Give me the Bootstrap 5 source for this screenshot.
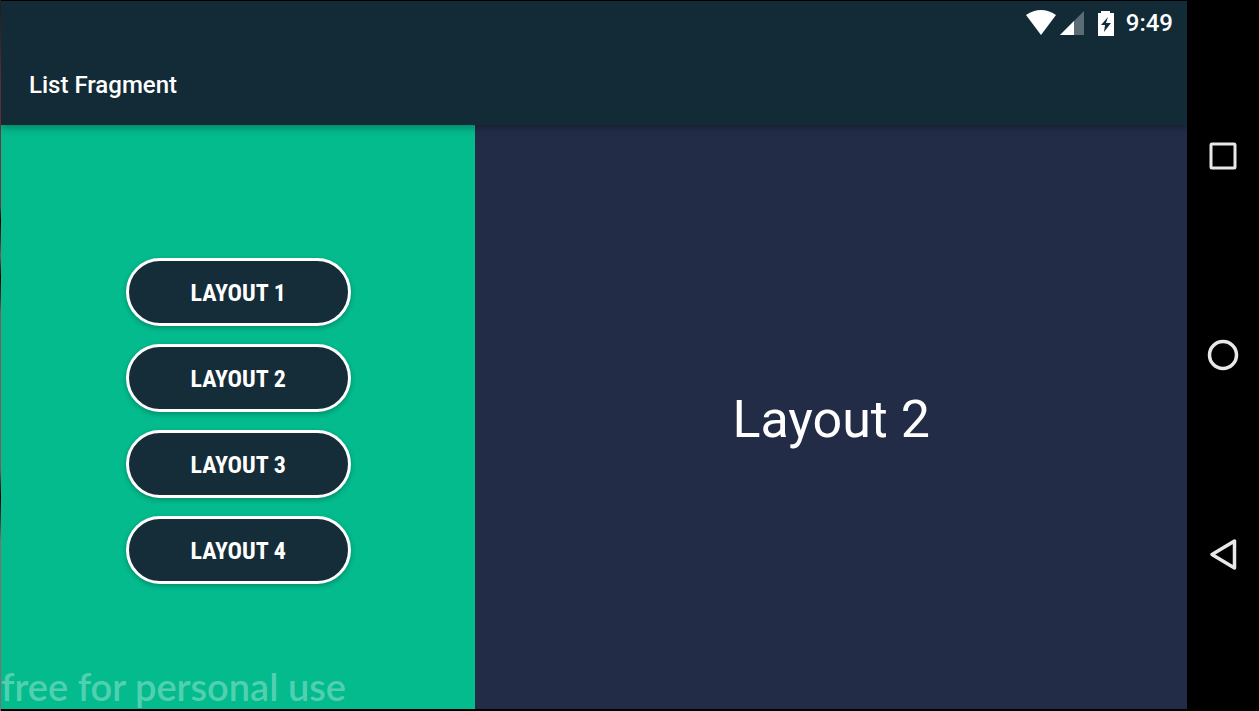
<!DOCTYPE html>
<html lang="en">
<head>
<meta charset="utf-8">
<meta name="viewport" content="width=device-width, initial-scale=1">
<title>List Fragment</title>
<link rel="stylesheet" href="https://cdn.jsdelivr.net/npm/bootstrap@5.3.0/dist/css/bootstrap.min.css">
<style>
  body { background: #000; font-family: Roboto, sans-serif; }
  .device { padding: 1px 0 2px 1px; background: linear-gradient(#222, #6b3a3e 12%, #6b3a3e 29%, #000 31%, #7d5a5c 36%, #000 39%, #7d5a5c 44%, #7d5a5c 66%, #000 70%, #7d7072 76%) left / 1px 100% no-repeat #000; }
  .app-bar { background: #122b37; box-shadow: 0 2px 8px rgba(0, 0, 0, .35); z-index: 1; }
  .status-bar { height: 44px; padding-right: 14px; }
  .status-icons { margin-bottom: 2px; }
  .clock { font-size: 24px; line-height: 44px; font-weight: 500; margin-left: 12px; }
  .app-title { font-size: 24px; line-height: 80px; font-weight: 500; padding-left: 28px; }
  .list-pane { width: 40%; background: #03bb8d; }
  .detail-pane { background: #222c47; font-size: 52px; line-height: 60px; padding-top: 6px; }
  .choices { gap: 18px; padding-top: 8px; }
  .btn-choice {
    --bs-btn-color: #fff; --bs-btn-bg: #152d39; --bs-btn-border-color: #fff;
    --bs-btn-hover-color: #fff; --bs-btn-hover-bg: #1f3d4c; --bs-btn-hover-border-color: #fff;
    --bs-btn-border-width: 3px;
    width: 225px; height: 68px; padding: 8px 12px 6px; font: 700 24px/28px "Roboto Condensed", Roboto, sans-serif;
    box-shadow: 0 2px 5px rgba(0, 0, 0, .25);
  }
  .watermark { font: 600 38px/46px Lato, sans-serif; color: rgba(255, 255, 255, .32); }
  .system-nav { width: 72px; padding: 56px 0; }
</style>
</head>
<body>
<div class="device d-flex vh-100 overflow-hidden">
  <div class="d-flex flex-column flex-grow-1 text-white">
    <header class="app-bar position-relative">
      <div class="status-bar d-flex align-items-center justify-content-end">
        <svg class="status-icons" width="88" height="28" viewBox="0 0 88 28" role="img" aria-label="Wi-Fi, signal and battery charging">
          <path fill="#fff" d="M0 7Q15-3 30 7L15 27Z"/>
          <path fill="#5b6c74" d="M58 3V27H34Z"/>
          <path fill="#fff" d="M48 13V27H34Z"/>
          <path fill="#fff" fill-rule="evenodd" d="M75 3H84V5H88V28H72V5H75ZM82 9L75 17H79L78 24L85 15H80Z"/>
        </svg>
        <time class="clock">9:49</time>
      </div>
      <h1 class="app-title m-0">List Fragment</h1>
    </header>
    <main class="d-flex flex-grow-1">
      <section class="list-pane position-relative d-flex align-items-center justify-content-center">
        <div class="choices d-flex flex-column">
          <button type="button" class="btn btn-choice rounded-pill">LAYOUT 1</button>
          <button type="button" class="btn btn-choice rounded-pill">LAYOUT 2</button>
          <button type="button" class="btn btn-choice rounded-pill">LAYOUT 3</button>
          <button type="button" class="btn btn-choice rounded-pill">LAYOUT 4</button>
        </div>
        <div class="watermark position-absolute start-0 bottom-0 text-nowrap">free for personal use</div>
      </section>
      <section class="detail-pane flex-grow-1 d-flex align-items-center justify-content-center">Layout 2</section>
    </main>
  </div>
  <nav class="system-nav d-flex flex-column flex-shrink-0" aria-label="System">
    <button type="button" class="btn p-0 border-0 flex-fill" aria-label="Recent apps"><svg width="32" height="32" fill="none" stroke="#e8e8e8" stroke-width="3"><rect x="4" y="4" width="24" height="24" rx="1"/></svg></button>
    <button type="button" class="btn p-0 border-0 flex-fill" aria-label="Home"><svg width="32" height="32" fill="none" stroke="#e8e8e8" stroke-width="3.5"><circle cx="16" cy="16" r="13.5"/></svg></button>
    <button type="button" class="btn p-0 border-0 flex-fill" aria-label="Back"><svg width="32" height="32" fill="none" stroke="#e8e8e8" stroke-width="3.5" stroke-linejoin="round"><path d="M27.500 3V30L5 16.500Z"/></svg></button>
  </nav>
</div>
<script src="https://cdn.jsdelivr.net/npm/bootstrap@5.3.0/dist/js/bootstrap.bundle.min.js"></script>
</body>
</html>
